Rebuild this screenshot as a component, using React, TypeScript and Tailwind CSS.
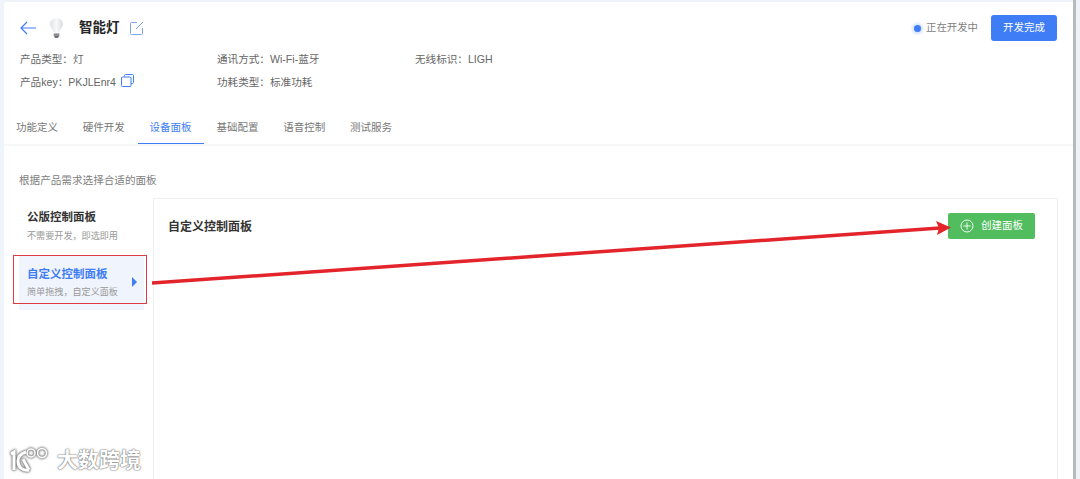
const tabs = ["功能定义", "硬件开发", "设备面板", "基础配置", "语音控制", "测试服务"];

const font = "font-['Liberation_Sans','Noto_Sans_CJK_SC',sans-serif]";

function Bulb() {
  return (
    <svg width="17" height="22" viewBox="0 0 18 24" className="ml-[12px]">
      <defs>
        <linearGradient id="bulb" x1="0" y1="0" x2="1" y2="0">
          <stop offset="0" stopColor="#dfe1e4" />
          <stop offset="0.5" stopColor="#f9f9fa" />
          <stop offset="1" stopColor="#d9dbde" />
        </linearGradient>
      </defs>
      <path d="M9 1C4.600 1 2 4.200 2 7.800C2 11.500 5.600 13.500 6 17H12C12.400 13.500 16 11.500 16 7.800C16 4.200 13.400 1 9 1Z" fill="url(#bulb)" />
      <path d="M6 18H12V20.500L10.500 23H7.500L6 20.500Z" fill="#6f7277" />
      <path d="M6 19.600H12" stroke="#c8cacd" strokeWidth="0.7" />
    </svg>
  );
}

function EditIcon() {
  return (
    <svg width="14" height="14" viewBox="0 0 14 14" fill="none" stroke="#7aa5f5" strokeWidth="1" className="ml-[10px]">
      <path d="M7 1.500H1.500C1 1.500 .5 2 .5 2.500V12.500C.5 13 1 13.500 1.500 13.500H11.500C12 13.500 12.500 13 12.500 12.500V7" />
      <path d="M6 8L13 1" />
    </svg>
  );
}

function CopyIcon() {
  return (
    <svg width="13" height="13" viewBox="0 0 13 13" fill="none" stroke="#3f7df6" strokeWidth="1" className="ml-[5px] -mt-[3px]">
      <path d="M3.500 2.500V1.500C3.500 1 4 .5 4.500 .5H11.500C12 .5 12.500 1 12.500 1.500V8.500C12.500 9 12 9.500 11.500 9.500H10" />
      <rect x=".5" y="3" width="9.500" height="9.500" rx="1" />
    </svg>
  );
}

function Logo() {
  return (
    <svg width="40" height="26" viewBox="0 0 40 26" fill="none" stroke="#ffffff" strokeWidth="3" style={{ filter: "drop-shadow(0 0 1px #6f6f6f) drop-shadow(0 0 1px #8a8a8a)" }}>
      <path d="M2 7L5 5V23" />
      <path d="M17 5C11 7 9 11 9 14C9 20 13 24 20 23" />
      <path d="M14 12L20 23" />
      <circle cx="22" cy="6" r="4" strokeWidth="1.500" />
      <circle cx="33" cy="6" r="4.500" strokeWidth="1.500" />
    </svg>
  );
}

export default function App() {
  return (
    <div className={`${font} relative h-[479px] w-[1080px] overflow-hidden bg-[#eff3f9]`}>
      <div className="flex h-full">
        <div className="flex w-[1073px] flex-col bg-[#eff3fa] pl-1 pt-[2px]">
          {/* cabecera */}
          <div className="h-[142px] shrink-0 rounded-tl-[3px] bg-white">
            <div className="flex items-start justify-between pl-4 pr-[16px] pt-[13px]">
              <div className="flex h-[26px] items-center">
                <svg width="16" height="14" viewBox="0 0 16 14" fill="none" stroke="#3f7df6" strokeWidth="1.200">
                  <path d="M1 7H16M7 1L1 7L7 13" />
                </svg>
                <Bulb />
                <span className="ml-[14px] text-[13.500px] font-bold text-[#262626]">智能灯</span>
                <EditIcon />
              </div>
              <div className="flex items-center">
                <span className="h-[7px] w-[7px] rounded-full bg-[#3f7df6] shadow-[0_0_3px_2px_#d5e2fd]" />
                <span className="ml-[5px] text-[10.400px] text-[#7f7f7f]">正在开发中</span>
                <button className="ml-[13px] h-[26px] w-[66px] rounded-[3px] bg-[#3f7df6] text-[10.500px] text-white">开发完成</button>
              </div>
            </div>
            <div className="mt-[10px] grid grid-cols-[197px_198px_1fr] gap-y-[7px] pl-4 text-[10.600px] leading-[16px] text-[#666666]">
              <div>产品类型：灯</div>
              <div>通讯方式：Wi-Fi-蓝牙</div>
              <div>无线标识：LIGH</div>
              <div className="flex items-center">产品key：PKJLEnr4<CopyIcon /></div>
              <div>功耗类型：标准功耗</div>
            </div>
            <div className="mt-[29px] flex gap-[24.800px] pl-[12px] text-[10.500px] leading-[16px] text-[#777777]">
              {tabs.map((tab) => (
                <div
                  key={tab}
                  className={
                    tab === "设备面板"
                      ? "mx-[-12px] h-[25px] border-b-[1.500px] border-[#3f7df6] px-[12px] text-[#3f7df6]"
                      : "h-[25px]"
                  }
                >
                  {tab}
                </div>
              ))}
            </div>
          </div>
          <div className="h-[2px] shrink-0 bg-[#f6f7f9]" />

          {/* contenido */}
          <div className="min-h-0 flex-1 bg-white pl-[15px] pt-[26px]">
            <div className="text-[10.600px] leading-[16px] text-[#808080]">根据产品需求选择合适的面板</div>
            <div className="mt-[10px] flex">
              <div className="w-[127px] pt-[5px]">
                <div className="h-[53px] pl-[8px] pt-[6px]">
                  <div className="text-[11.500px] font-bold leading-[16px] text-[#333333]">公版控制面板</div>
                  <div className="mt-[4px] text-[9.100px] leading-[14px] text-[#999999]">不需要开发，即选即用</div>
                </div>
                <div className="relative h-[54px] w-[125px] bg-[#f0f4fd] pl-[8px] pt-[10px]">
                  <div className="text-[11.500px] font-bold leading-[16px] text-[#3f7df6]">自定义控制面板</div>
                  <div className="mt-[3px] text-[9.100px] leading-[14px] text-[#999999]">简单拖拽，自定义面板</div>
                  <span className="absolute left-[113px] top-[21px] h-0 w-0 border-y-[5px] border-l-[5px] border-y-transparent border-l-[#3f7df6]" />
                </div>
              </div>
              <div className="ml-[7px] h-[300px] w-[905px] shrink-0 border border-[#eef0f4] pl-[14px] pr-[22px] pt-[14px]">
                <div className="flex items-start justify-between">
                  <div className="pt-[4px] text-[12px] font-bold leading-[20px] text-[#333333]">自定义控制面板</div>
                  <button className="flex h-[26px] w-[87px] items-center justify-center rounded-[2px] bg-[#52bd5f] text-[10.500px] text-white">
                    <svg width="14" height="14" viewBox="0 0 14 14" fill="none" stroke="white" strokeWidth="0.900" className="mr-[7px]">
                      <circle cx="7" cy="7" r="6" />
                      <path d="M7 3.500V10.500M3.500 7H10.500" />
                    </svg>
                    创建面板
                  </button>
                </div>
              </div>
            </div>
          </div>
        </div>
        <div className="h-full w-[3px] bg-[#b8b9bc]" />
      </div>

      {/* anotaciones del pantallazo */}
      <div className="absolute left-[13px] top-[255px] h-[49px] w-[134px] border border-[#dc3b42]" />
      <svg width="1080" height="479" className="pointer-events-none absolute left-0 top-0">
        <path d="M152 283L940 228" stroke="#e3242b" strokeWidth="3.500" />
        <path d="M951 227.500L936 221L939 228L937 235Z" fill="#e3242b" />
      </svg>

      {/* marca de agua */}
      <div className="absolute left-[9px] top-[444px] flex items-center">
        <Logo />
        <span className="ml-[8px] text-[21px] font-bold text-white [text-shadow:0_0_2px_#666666,0_0_1px_#666666]">大数跨境</span>
      </div>
    </div>
  );
}
